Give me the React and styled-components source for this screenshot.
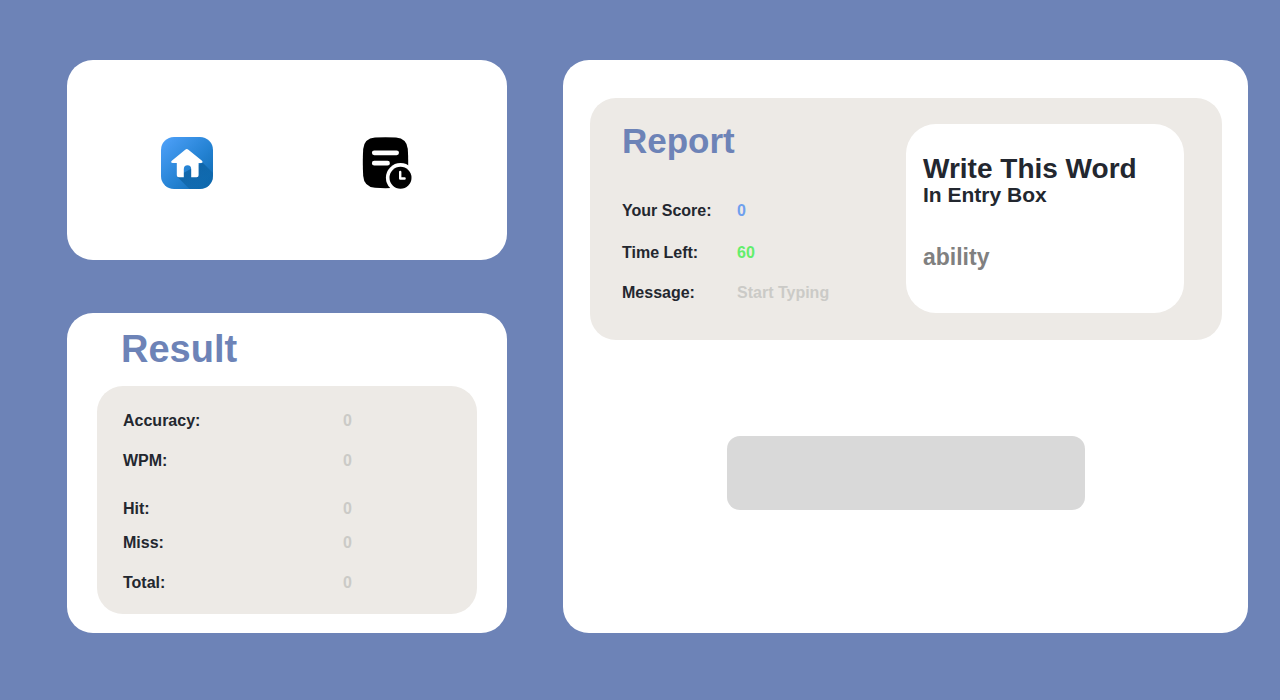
import React, { useState } from "react";
import styled, { createGlobalStyle } from "styled-components";

const GlobalStyle = createGlobalStyle`
  *, *::before, *::after { box-sizing: border-box; }
  body {
    margin: 0;
    background: #6d83b7;
    color: #23272f;
    font-family: "Liberation Sans", Arial, sans-serif;
    font-weight: 700;
  }
`;

const Page = styled.main`
  display: grid;
  grid-template-columns: minmax(0, 440fr) minmax(0, 685fr);
  align-items: start;
  gap: 56px;
  padding: 60px 32px 67px 67px;
`;

const Sidebar = styled.div`
  display: flex;
  flex-direction: column;
  gap: 53px;
`;

const Card = styled.section`
  background: #fff;
  border-radius: 26px;
`;

const NavCard = styled(Card).attrs({ as: "nav" })`
  display: grid;
  grid-template-columns: 1fr 1fr;
  place-items: center;
  padding: 77px 20px 71px;
`;

const IconButton = styled.button`
  display: block;
  width: 52px;
  height: 52px;
  padding: 0;
  border: 0;
  background: none;
  cursor: pointer;

  svg { display: block; }
`;

const ResultCard = styled(Card)`
  padding: 19px 30px;
`;

const Title = styled.h2`
  margin: 0;
  color: #6d83b7;
  font-size: ${(p) => p.$size}px;
  line-height: 34px;
`;

const ResultTitle = styled(Title)`
  padding: 0 24px;
`;

const Panel = styled.div`
  background: #edeae6;
  border-radius: 26px;
`;

const ResultPanel = styled(Panel)`
  margin-top: 20px;
  padding: 25px 26px 21px;
`;

const Stats = styled.dl`
  margin: 0;
  font-size: 16px;
  line-height: 20px;
`;

const Stat = styled.div`
  display: grid;
  grid-template-columns: ${(p) => p.$labelWidth}px 1fr;
  margin-top: ${(p) => p.$space}px;
`;

const StatValue = styled.dd`
  margin: 0;
  color: ${(p) => p.$color};
`;

const GameCard = styled(Card)`
  display: flex;
  flex-direction: column;
  align-items: center;
  gap: 96px;
  padding: 38px 26px 123px 27px;
`;

const ReportPanel = styled(Panel)`
  display: flex;
  justify-content: space-between;
  align-self: stretch;
  padding: 26px 38px 27px 32px;
`;

const ReportStats = styled(Stats)`
  margin-top: 43px;
`;

const WordCard = styled.div`
  width: 278px;
  padding: 29px 17px 41px;
  background: #fff;
  border-radius: 30px;
`;

const WordHeading = styled.h3`
  margin: 0;
  font-size: 28px;
  line-height: 32px;
`;

const WordHint = styled.p`
  margin: 0;
  font-size: 21px;
  line-height: 20px;
`;

const Word = styled.p`
  margin: 37px 0 0;
  color: #808080;
  font-size: 23px;
  line-height: 30px;
`;

const EntryBox = styled.input`
  width: 358px;
  max-width: 100%;
  height: 74px;
  padding: 0 20px;
  border: 0;
  border-radius: 13px;
  outline: none;
  background: #d9d9d9;
  color: #23272f;
  font: 700 24px "Liberation Sans", Arial, sans-serif;
`;

function HomeIcon() {
  return (
    <svg width="52" height="52" viewBox="0 0 52 52" aria-hidden="true">
      <defs>
        <linearGradient id="home-bg" x1="0" y1="0" x2="1" y2="1">
          <stop offset="0" stopColor="#50a2fb" />
          <stop offset="0.55" stopColor="#2583d4" />
          <stop offset="1" stopColor="#0c68ad" />
        </linearGradient>
        <linearGradient id="home-shadow" x1="0.4" y1="0.4" x2="1" y2="1">
          <stop offset="0" stopColor="#065895" stopOpacity="0.6" />
          <stop offset="1" stopColor="#065f9f" stopOpacity="0.2" />
        </linearGradient>
        <clipPath id="home-clip">
          <rect width="52" height="52" rx="13" />
        </clipPath>
      </defs>
      <g clipPath="url(#home-clip)">
        <rect width="52" height="52" fill="url(#home-bg)" />
        <path d="M16 39.5 L41.5 25.5 L52 36 V52 H28.5 Z" fill="url(#home-shadow)" />
      </g>
      <path
        d="M24.2 12.7q1.6-1.3 3.2 0L41 23.8q1.6 2-1 2.1h-2.4v12.4q0 2-2 2h-5.4v-8.1q0-3.9-3.7-3.9t-3.7 3.9v8.1h-5q-2 0-2-2V25.9h-4q-2.7-.2-1-2.1Z"
        fill="#fff"
      />
    </svg>
  );
}

function HistoryIcon() {
  return (
    <svg width="52" height="52" viewBox="0 0 52 52" aria-hidden="true">
      <path
        d="M14 .6Q24.5-.3 35 .6Q45.8 1.6 46.8 12Q47.6 25.5 46.8 39Q45.8 49.9 35 50.8Q24.5 51.6 14 50.8Q3 49.9 2.2 39Q1.4 25.5 2.2 12Q3 1.6 14 .6Z"
        fill="#000"
      />
      <path d="M13.3 15.8H35.6M13.3 26.2H26.5" stroke="#fff" strokeWidth="4.8" strokeLinecap="round" />
      <circle cx="39.5" cy="40.7" r="14.6" fill="#fff" />
      <circle cx="39.5" cy="40.7" r="11" fill="#000" />
      <path d="M39.2 34.9V41.5H43.6" fill="none" stroke="#fff" strokeWidth="2.4" strokeLinecap="round" strokeLinejoin="round" />
    </svg>
  );
}

const MUTED = "#cbcac7";

const results = [
  { label: "Accuracy:", value: "0", space: 0 },
  { label: "WPM:", value: "0", space: 20 },
  { label: "Hit:", value: "0", space: 28 },
  { label: "Miss:", value: "0", space: 14 },
  { label: "Total:", value: "0", space: 20 },
];

const report = [
  { label: "Your Score:", value: "0", color: "#6fa0ee", space: 0 },
  { label: "Time Left:", value: "60", color: "#62ee6c", space: 22 },
  { label: "Message:", value: "Start Typing", color: MUTED, space: 20 },
];

export default function App() {
  const [entry, setEntry] = useState("");

  return (
    <>
      <GlobalStyle />
      <Page>
        <Sidebar>
          <NavCard aria-label="Main">
            <IconButton type="button" aria-label="Home">
              <HomeIcon />
            </IconButton>
            <IconButton type="button" aria-label="History">
              <HistoryIcon />
            </IconButton>
          </NavCard>
          <ResultCard>
            <ResultTitle $size={38}>Result</ResultTitle>
            <ResultPanel>
              <Stats>
                {results.map((item) => (
                  <Stat key={item.label} $labelWidth={220} $space={item.space}>
                    <dt>{item.label}</dt>
                    <StatValue $color={MUTED}>{item.value}</StatValue>
                  </Stat>
                ))}
              </Stats>
            </ResultPanel>
          </ResultCard>
        </Sidebar>
        <GameCard>
          <ReportPanel>
            <div>
              <Title $size={35}>Report</Title>
              <ReportStats>
                {report.map((item) => (
                  <Stat key={item.label} $labelWidth={115} $space={item.space}>
                    <dt>{item.label}</dt>
                    <StatValue $color={item.color}>{item.value}</StatValue>
                  </Stat>
                ))}
              </ReportStats>
            </div>
            <WordCard>
              <WordHeading>Write This Word</WordHeading>
              <WordHint>In Entry Box</WordHint>
              <Word id="word">ability</Word>
            </WordCard>
          </ReportPanel>
          <EntryBox
            type="text"
            aria-label="Entry box"
            aria-describedby="word"
            autoComplete="off"
            value={entry}
            onChange={(event) => setEntry(event.target.value)}
          />
        </GameCard>
      </Page>
    </>
  );
}
